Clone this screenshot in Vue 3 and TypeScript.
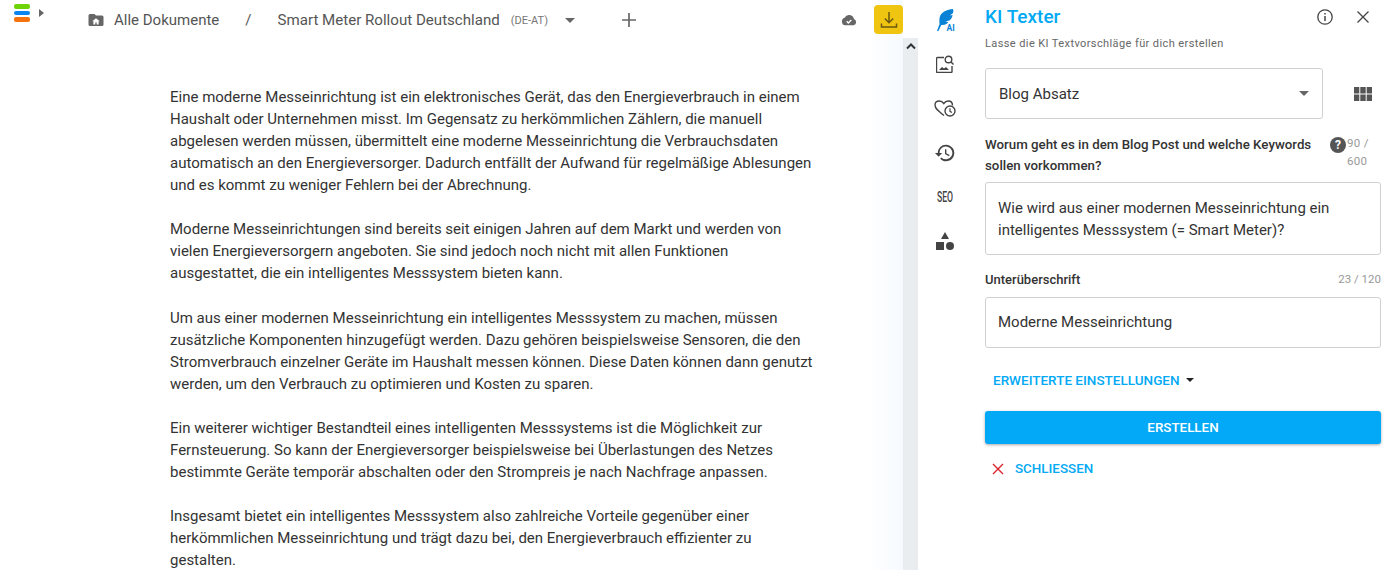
<script setup lang="ts">
const paragraphs = [
  'Eine moderne Messeinrichtung ist ein elektronisches Gerät, das den Energieverbrauch in einem Haushalt oder Unternehmen misst. Im Gegensatz zu herkömmlichen Zählern, die manuell abgelesen werden müssen, übermittelt eine moderne Messeinrichtung die Verbrauchsdaten automatisch an den Energieversorger. Dadurch entfällt der Aufwand für regelmäßige Ablesungen und es kommt zu weniger Fehlern bei der Abrechnung.',
  'Moderne Messeinrichtungen sind bereits seit einigen Jahren auf dem Markt und werden von vielen Energieversorgern angeboten. Sie sind jedoch noch nicht mit allen Funktionen ausgestattet, die ein intelligentes Messsystem bieten kann.',
  'Um aus einer modernen Messeinrichtung ein intelligentes Messsystem zu machen, müssen zusätzliche Komponenten hinzugefügt werden. Dazu gehören beispielsweise Sensoren, die den Stromverbrauch einzelner Geräte im Haushalt messen können. Diese Daten können dann genutzt werden, um den Verbrauch zu optimieren und Kosten zu sparen.',
  'Ein weiterer wichtiger Bestandteil eines intelligenten Messsystems ist die Möglichkeit zur Fernsteuerung. So kann der Energieversorger beispielsweise bei Überlastungen des Netzes bestimmte Geräte temporär abschalten oder den Strompreis je nach Nachfrage anpassen.',
  'Insgesamt bietet ein intelligentes Messsystem also zahlreiche Vorteile gegenüber einer herkömmlichen Messeinrichtung und trägt dazu bei, den Energieverbrauch effizienter zu gestalten.'
]
</script>

<template>
  <div class="app">
    <main class="editor">
      <header class="topbar">
        <div class="logo">
          <span class="logo-bar green"></span>
          <span class="logo-bar blue"></span>
          <span class="logo-bar orange"></span>
        </div>
        <span class="logo-caret"></span>
        <nav class="crumbs">
          <svg class="folder" width="18" height="18" viewBox="0 0 24 24">
            <path fill="#666" d="M10 4H4a2 2 0 0 0-2 2v12a2 2 0 0 0 2 2h16a2 2 0 0 0 2-2V8a2 2 0 0 0-2-2h-8l-2-2z" />
            <path fill="#fff" d="M12 9.5l-5 4.3h1.5V18h2.6v-2.8h1.8V18h2.6v-4.2H17z" />
          </svg>
          <span class="crumb-root">Alle Dokumente</span>
          <span class="slash">/</span>
          <span class="crumb-doc">Smart Meter Rollout Deutschland</span>
          <span class="locale">(DE-AT)</span>
          <span class="doc-caret"></span>
          <svg class="plus" width="16" height="16" viewBox="0 0 16 16">
            <path d="M8 1v14M1 8h14" stroke="#666" stroke-width="1.7" fill="none" />
          </svg>
        </nav>
        <svg class="cloud" width="16" height="16" viewBox="0 0 24 24">
          <path fill="#666" d="M19.4 10.5A7.5 7.5 0 0 0 5.4 8.5 6 6 0 0 0 6 20h13a5 5 0 0 0 .4-9.5z" />
          <path d="M8.5 14l2.5 2.5 4.5-4.5" stroke="#fff" stroke-width="2" fill="none" />
        </svg>
        <button class="download" type="button" aria-label="Download">
          <svg width="20" height="20" viewBox="0 0 20 20">
            <path d="M10 2v10.5M5.8 8.5l4.2 4.2 4.2-4.2M2.5 13.5v3.5h15v-3.5" stroke="#6b5a10" stroke-width="1.5" fill="none" />
          </svg>
        </button>
      </header>
      <article class="doc">
        <p v-for="(text, i) in paragraphs" :key="i">{{ text }}</p>
      </article>
    </main>

    <div class="scrollbar">
      <svg width="12" height="8" viewBox="0 0 12 8">
        <path d="M2 6.5l4-4 4 4" stroke="#333" stroke-width="2" fill="none" />
      </svg>
    </div>

    <aside class="rail">
      <svg class="rail-feather" width="20" height="24" viewBox="0 0 20 24">
        <path fill="#0a82d6" d="M18 1C12 1.500 6 4 4.800 9c-.6 2.500-.5 5-.2 7L2 22.800l1.300.5 3-6.300c3 .3 6-1 7-3l-3-.2 4.500-1.500c1.700-1.500 2.700-3.700 2.700-5.300l-2.700.5 3-2.300C18.500 4 18.500 2.500 18 1z" />
        <text x="11.500" y="23" class="rail-ai">AI</text>
      </svg>
      <svg class="rail-image" width="18" height="18" viewBox="0 0 18 18">
        <path d="M8 2.500H1.500a1 1 0 0 0-1 1V16.500a1 1 0 0 0 1 1H15a1 1 0 0 0 1-1V11" stroke="#444" stroke-width="1.400" fill="none" />
        <circle cx="12.500" cy="4.500" r="3.300" stroke="#444" stroke-width="1.400" fill="none" />
        <path d="M15 7L17.500 9.500" stroke="#444" stroke-width="1.400" />
        <path d="M3 15l3-3 2 1.500 2-1.500 3 3z" fill="#444" />
      </svg>
      <svg class="rail-heart" width="22" height="17" viewBox="0 0 22 17">
        <path d="M10 15.500C4 11 1 8.500 1 5 1 2.500 3 1 5.300 1 7.100 1 8.800 2 9.800 3.500 10.800 2 12.500 1 14.300 1c2.400 0 4.200 1.500 4.200 4.500" stroke="#444" stroke-width="1.400" fill="none" />
        <circle cx="16" cy="11" r="5" fill="#fff" stroke="#444" stroke-width="1.400" />
        <path d="M16 8.300v3l1.900 1.200" stroke="#444" stroke-width="1.200" fill="none" />
      </svg>
      <svg class="rail-history" width="22" height="22" viewBox="0 0 24 24">
        <path fill="#444" d="M13 3a9 9 0 0 0-9 9H1l3.900 3.900.1.100L9 12H6a7 7 0 1 1 2.100 4.900l-1.400 1.400A9 9 0 1 0 13 3zm-1 5v5l4.300 2.500.7-1.200-3.500-2.100V8z" />
      </svg>
      <span class="rail-seo">SEO</span>
      <svg class="rail-shapes" width="18" height="18" viewBox="0 0 18 18">
        <path fill="#444" d="M9 0l4 7H5z" />
        <rect x="0" y="10" width="8" height="8" fill="#444" />
        <circle cx="14" cy="14" r="4" fill="#444" />
      </svg>
    </aside>

    <section class="panel">
      <div class="panel-head">
        <h1>KI Texter</h1>
        <svg class="info" width="18" height="18" viewBox="0 0 18 18">
          <circle cx="9" cy="9" r="7.200" stroke="#444" stroke-width="1.300" fill="none" />
          <path d="M9 8v5M9 5v1.500" stroke="#444" stroke-width="1.500" />
        </svg>
        <svg class="close" width="14" height="14" viewBox="0 0 14 14">
          <path d="M1.500 1.500l11 11M12.500 1.500l-11 11" stroke="#444" stroke-width="1.300" />
        </svg>
      </div>
      <p class="subtitle">Lasse die KI Textvorschläge für dich erstellen</p>

      <div class="select-row">
        <div class="select">
          <span>Blog Absatz</span>
          <span class="select-caret"></span>
        </div>
        <svg class="grid-icon" width="18" height="14" viewBox="0 0 18 14">
          <path fill="#555" d="M0 0h5.300v6.500H0zM6.300 0h5.400v6.500H6.300zM12.700 0H18v6.500h-5.300zM0 7.500h5.300V14H0zM6.300 7.500h5.400V14H6.300zM12.700 7.500H18V14h-5.300z" />
        </svg>
      </div>

      <div class="label-row topic">
        <label>Worum geht es in dem Blog Post und welche Keywords sollen vorkommen?</label>
        <svg class="help" width="16" height="16" viewBox="0 0 16 16">
          <circle cx="8" cy="8" r="8" fill="#555" />
          <text x="8" y="12" class="help-mark">?</text>
        </svg>
        <span class="count wrap">90 / 600</span>
      </div>
      <div class="field multi">Wie wird aus einer modernen Messeinrichtung ein intelligentes Messsystem (= Smart Meter)?</div>

      <div class="label-row sub">
        <label>Unterüberschrift</label>
        <span class="count">23 / 120</span>
      </div>
      <div class="field single">Moderne Messeinrichtung</div>

      <div class="advanced">
        <span>ERWEITERTE EINSTELLUNGEN</span>
        <span class="adv-caret"></span>
      </div>

      <button class="create" type="button">ERSTELLEN</button>

      <div class="dismiss">
        <svg width="12" height="12" viewBox="0 0 12 12">
          <path d="M1 1l10 10M11 1L1 11" stroke="#d9232e" stroke-width="1.400" />
        </svg>
        <span>SCHLIESSEN</span>
      </div>
    </section>
  </div>
</template>

<style>
html,
body {
  margin: 0;
  overflow: hidden;
  background: #fff;
}
</style>

<style scoped>
.app {
  display: flex;
  width: 1390px;
  height: 570px;
  overflow: hidden;
  font-family: Roboto, "Liberation Sans", sans-serif;
  color: #333;
}

/* Editor */
.editor {
  width: 903px;
  flex: none;
  background: linear-gradient(to right, #fff 96%, #f6faff);
}

.topbar {
  display: flex;
  align-items: flex-start;
  height: 38px;
}

.logo {
  display: flex;
  flex-direction: column;
  gap: 2px;
  margin: 4px 0 0 14px;
}

.logo-bar {
  width: 16px;
  height: 4.500px;
  border-radius: 2px;
}

.green { background: #6fd30a; }
.blue { background: #0a84f0; }
.orange { background: #f5720f; }

.logo-caret {
  margin: 9px 0 0 9px;
  border-left: 5px solid #666;
  border-top: 4px solid transparent;
  border-bottom: 4px solid transparent;
}

.crumbs {
  display: flex;
  align-items: center;
  height: 40px;
  margin-left: 43px;
  color: #555;
  font-size: 15px;
}

.crumb-root { margin-left: 9px; }
.slash { margin-left: 26px; }

.crumb-doc {
  margin-left: 26px;
  font-size: 15.100px;
}

.locale {
  margin-left: 11px;
  font-size: 11px;
  color: #777;
}

.doc-caret {
  margin-left: 17px;
  border-top: 5px solid #666;
  border-left: 5px solid transparent;
  border-right: 5px solid transparent;
}

.plus { margin-left: 46px; }

.cloud { margin: 12px 0 0 auto; }

.download {
  width: 29px;
  height: 29px;
  margin: 5px 0 0 17px;
  padding: 0;
  border: 0;
  border-radius: 4px;
  background: #efc512;
  display: flex;
  align-items: center;
  justify-content: center;
}

.doc {
  padding: 48px 87px 0 170px;
  font-size: 15px;
  line-height: 22.060px;
  color: #333;
}

.doc p {
  margin: 0 0 22.060px;
}

/* Scrollbar */
.scrollbar {
  width: 15px;
  flex: none;
  margin-top: 38px;
  background: #e9edf0;
  display: flex;
  justify-content: center;
  align-items: flex-start;
  padding-top: 4px;
}

/* Icon rail */
.rail {
  width: 54px;
  flex: none;
  display: flex;
  flex-direction: column;
  align-items: center;
  padding-top: 8px;
}

.rail-ai {
  font: 700 8.500px Roboto, sans-serif;
  fill: #0a82d6;
}

.rail-image { margin-top: 23px; }
.rail-heart { margin-top: 27px; }
.rail-history { margin-top: 25px; }

.rail-seo {
  margin-top: 26px;
  font-size: 14px;
  line-height: 14px;
  font-weight: 500;
  color: #444;
  transform: scaleX(0.62);
}

.rail-shapes { margin-top: 28px; }

/* Panel */
.panel {
  width: 405px;
  flex: none;
  margin-left: 13px;
  padding-right: 9px;
  box-sizing: border-box;
}

.panel-head {
  display: flex;
  align-items: center;
  height: 32px;
  padding-top: 1px;
}

h1 {
  margin: 0 0 2px;
  font-size: 19px;
  font-weight: 500;
  color: #03a9f4;
  flex: 1;
}

.info { margin-right: 22px; }
.close { margin-right: 11px; }

.subtitle {
  margin: 4px 0 0;
  font-size: 11px;
  letter-spacing: 0.4px;
  color: #666;
}

.select-row {
  display: flex;
  align-items: center;
  margin-top: 18px;
}

.select {
  width: 338px;
  height: 51px;
  box-sizing: border-box;
  border: 1px solid #d0d0d0;
  border-radius: 3px;
  padding: 0 13px;
  display: flex;
  align-items: center;
  justify-content: space-between;
  font-size: 15px;
}

.select-caret {
  border-top: 5px solid #666;
  border-left: 5px solid transparent;
  border-right: 5px solid transparent;
}

.grid-icon { margin-left: 31px; }

.label-row {
  display: flex;
  font-weight: 500;
  line-height: 21px;
  color: #333;
}

.topic {
  margin-top: 15px;
  font-size: 13.300px;
}

.topic label { width: 340px; }

.help { margin: 3px 0 0 5px; flex: none; }
.help-mark {
  font: 700 12px Roboto, sans-serif;
  fill: #fff;
  text-anchor: middle;
}

.count {
  font-size: 11.500px;
  font-weight: 400;
  color: #999;
  margin-left: auto;
}

.wrap {
  width: 24px;
  margin-left: 1px;
  line-height: 18px;
  letter-spacing: 0.3px;
}

.field {
  box-sizing: border-box;
  border: 1px solid #d0d0d0;
  border-radius: 3px;
  padding: 0 12px;
  font-size: 15px;
  display: flex;
  align-items: center;
}

.multi {
  height: 73px;
  margin-top: 6px;
  line-height: 22px;
}

.sub {
  margin-top: 14px;
  align-items: center;
  font-size: 13px;
}

.single {
  height: 51px;
  margin-top: 7px;
  padding-bottom: 1px;
}

.advanced {
  display: flex;
  align-items: center;
  margin: 24px 0 0 8px;
  font-size: 13.500px;
  font-weight: 500;
  color: #03a9f4;
}

.adv-caret {
  margin-left: 6px;
  border-top: 4px solid #222;
  border-left: 4px solid transparent;
  border-right: 4px solid transparent;
}

.create {
  display: block;
  width: 100%;
  height: 33px;
  margin-top: 23px;
  border: 0;
  border-radius: 3px;
  background: #03a9f6;
  color: #fff;
  font: 500 13.400px Roboto, sans-serif;
  box-shadow: 0 1px 3px rgba(0, 0, 0, 0.35);
}

.dismiss {
  display: flex;
  align-items: center;
  gap: 11px;
  margin: 17px 0 0 7px;
  font-size: 13.400px;
  font-weight: 500;
  color: #03a9f4;
}
</style>
